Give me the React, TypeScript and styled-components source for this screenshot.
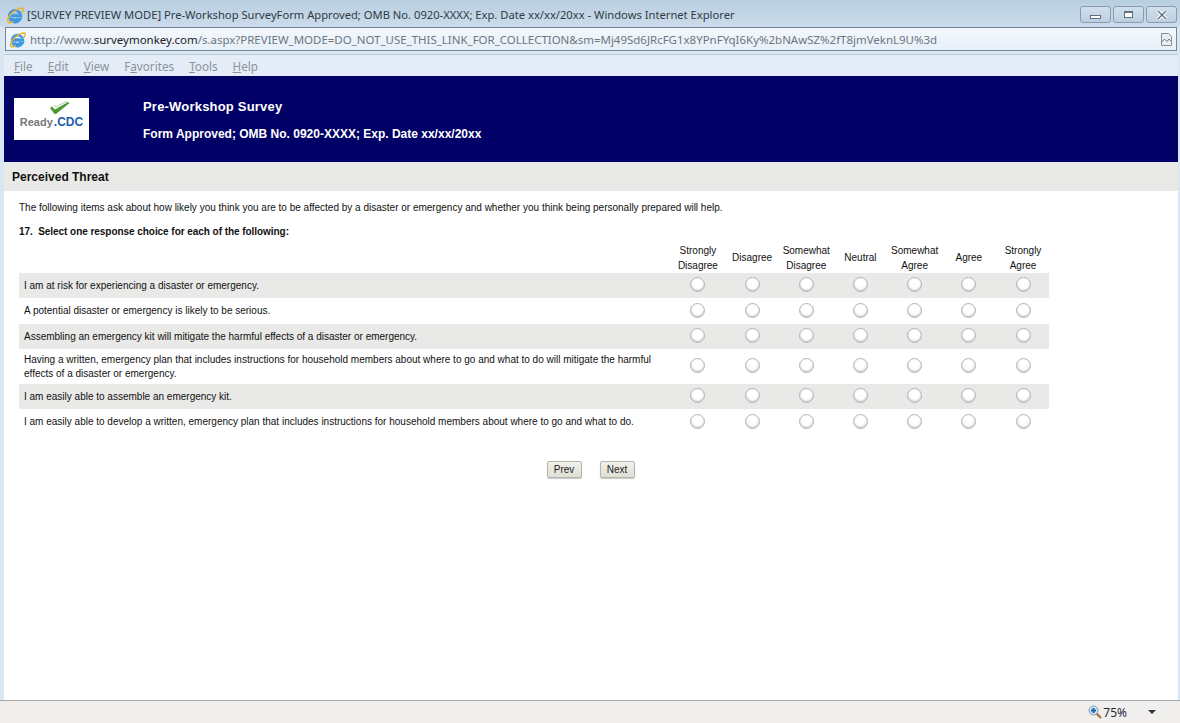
import * as React from 'react';
import styled, { createGlobalStyle } from 'styled-components';

const columns = [
  ['Strongly', 'Disagree'],
  ['Disagree'],
  ['Somewhat', 'Disagree'],
  ['Neutral'],
  ['Somewhat', 'Agree'],
  ['Agree'],
  ['Strongly', 'Agree'],
];

const rows = [
  { text: 'I am at risk for experiencing a disaster or emergency.', height: 25 },
  { text: 'A potential disaster or emergency is likely to be serious.', height: 26 },
  { text: 'Assembling an emergency kit will mitigate the harmful effects of a disaster or emergency.', height: 25 },
  {
    text: 'Having a written, emergency plan that includes instructions for household members about where to go and what to do will mitigate the harmful effects of a disaster or emergency.',
    height: 35,
  },
  { text: 'I am easily able to assemble an emergency kit.', height: 25 },
  {
    text: 'I am easily able to develop a written, emergency plan that includes instructions for household members about where to go and what to do.',
    height: 26,
  },
];

const menus = [
  ['F', 'ile'],
  ['E', 'dit'],
  ['V', 'iew'],
  ['Fa', 'vorites'],
  ['T', 'ools'],
  ['H', 'elp'],
] as const;

const IeIcon = ({ size }: { size: number }) => (
  <svg width={size} height={size} viewBox="0 0 20 20">
    <path d="M5 11h11.500a6.500 6.500 0 1 0-.8 3.500h-3.400a3.300 3.300 0 0 1-5.500-1.200" fill="none" stroke="#3d9ae0" strokeWidth="3" />
    <path d="M7 9h6.500" stroke="#3d9ae0" strokeWidth="1" />
    <path d="M2 17.500C.5 14.500 6 7 12 4c3.500-1.700 6.500-2.500 7-.8.400 1.300-.7 3.300-1.800 4.800" fill="none" stroke="#f0b22e" strokeWidth="1.700" />
    <path d="M2 17.500c1 1.700 3.800 1 6-.4" fill="none" stroke="#f0b22e" strokeWidth="1.700" />
  </svg>
);

const LogoMark = () => (
  <svg width="21" height="14" viewBox="0 0 21 14">
    <path d="M1 7l2-1.500 3 3L19 1l1.500 1L7 13H5.500z" fill="#4f9a2f" />
    <path d="M5 4l2 2L18 0" fill="none" stroke="#a9cf93" strokeWidth="1" />
  </svg>
);

const App = () => (
  <Window>
    <GlobalStyle />
    <TitleBar>
      <IeIcon size={18} />
      <TitleText>[SURVEY PREVIEW MODE] Pre-Workshop SurveyForm Approved; OMB No. 0920-XXXX; Exp. Date xx/xx/20xx - Windows Internet Explorer</TitleText>
      <WindowButtons>
        <WindowButton>
          <MinGlyph />
        </WindowButton>
        <WindowButton>
          <MaxGlyph />
        </WindowButton>
        <WindowButton>
          <svg width="12" height="10" viewBox="0 0 12 10">
            <path d="M2 1l8 8M10 1L2 9" stroke="#fff" strokeWidth="3.400" />
            <path d="M2 1l8 8M10 1L2 9" stroke="#5f6f80" strokeWidth="1.400" />
          </svg>
        </WindowButton>
      </WindowButtons>
    </TitleBar>
    <AddressBar>
      <IeIcon size={17} />
      <Url>
        http://www.<b>surveymonkey.com</b>/s.aspx?PREVIEW_MODE=DO_NOT_USE_THIS_LINK_FOR_COLLECTION&amp;sm=Mj49Sd6JRcFG1x8YPnFYqI6Ky%2bNAwSZ%2fT8jmVeknL9U%3d
      </Url>
      <svg width="11" height="13" viewBox="0 0 11 13">
        <path d="M.5.500h7l3 3v9H.5z" fill="#e8eef4" stroke="#8a8f94" />
        <path d="M1 9l2.500-3 2.500 2.500L8 6l2 2" fill="none" stroke="#777" />
      </svg>
    </AddressBar>
    <MenuBar>
      {menus.map(([key, rest]) => (
        <MenuItem key={key}>
          {key === 'Fa' ? (
            <>
              F<u>a</u>
            </>
          ) : (
            <u>{key}</u>
          )}
          {rest}
        </MenuItem>
      ))}
    </MenuBar>
    <Page>
      <Banner>
        <Logo>
          <LogoCheck>
            <LogoMark />
          </LogoCheck>
          <LogoReady>Ready</LogoReady>
          <LogoCdc>.CDC</LogoCdc>
        </Logo>
        <BannerText>
          <SurveyTitle>Pre-Workshop Survey</SurveyTitle>
          <SurveySubtitle>Form Approved; OMB No. 0920-XXXX; Exp. Date xx/xx/20xx</SurveySubtitle>
        </BannerText>
      </Banner>
      <SectionHeader>Perceived Threat</SectionHeader>
      <Content>
        <Intro>
          The following items ask about how likely you think you are to be affected by a disaster or emergency and whether you think being personally prepared will help.
        </Intro>
        <Question>17.&nbsp; Select one response choice for each of the following:</Question>
        <Matrix>
          <HeaderRow>
            <RowLabel />
            {columns.map((lines, i) => (
              <HeaderCell key={i}>
                {lines.map((l) => (
                  <div key={l}>{l}</div>
                ))}
              </HeaderCell>
            ))}
          </HeaderRow>
          {rows.map((row, r) => (
            <Row key={r} $shaded={r % 2 === 0} $height={row.height}>
              <RowLabel>{row.text}</RowLabel>
              {columns.map((_, c) => (
                <RadioCell key={c}>
                  <Radio />
                </RadioCell>
              ))}
            </Row>
          ))}
        </Matrix>
        <Buttons>
          <NavButton>Prev</NavButton>
          <NavButton>Next</NavButton>
        </Buttons>
      </Content>
    </Page>
    <StatusBar>
      <svg width="14" height="14" viewBox="0 0 14 14">
        <path d="M8.500 8.500l4.500 4.500" stroke="#a5793f" strokeWidth="2.400" />
        <circle cx="5.500" cy="5.500" r="4.500" fill="#cfe2f3" stroke="#7f99b3" />
        <path d="M3 5.500h5M5.500 3v5" stroke="#1c5fb0" strokeWidth="1.800" />
      </svg>
      <Zoom>75%</Zoom>
      <Caret />
    </StatusBar>
  </Window>
);

export default App;

const GlobalStyle = createGlobalStyle`
  html, body {
    margin: 0;
    padding: 0;
    height: 100%;
    overflow: hidden;
  }
`;

const Window = styled.div`
  width: 1180px;
  height: 723px;
  display: flex;
  flex-direction: column;
  background: #dbe6f3;
  font-family: 'Liberation Sans', Arial, sans-serif;
  overflow: hidden;
`;

const TitleBar = styled.div`
  height: 27px;
  flex: none;
  display: flex;
  align-items: center;
  gap: 3px;
  padding: 2px 3px 0 6px;
  box-sizing: border-box;
  background: linear-gradient(#b9cfe2, #cbdbea);
`;

const TitleText = styled.div`
  flex: 1;
  font: 11.200px 'Noto Sans', 'Open Sans', sans-serif;
  color: #2f3a44;
  white-space: nowrap;
`;

const WindowButtons = styled.div`
  display: flex;
  gap: 2px;
`;

const WindowButton = styled.div`
  width: 29px;
  height: 15px;
  display: flex;
  align-items: center;
  justify-content: center;
  border: 1px solid #8b9cb0;
  border-radius: 3px;
  background: linear-gradient(#d2dfec, #bccfe0);
`;

const MinGlyph = styled.div`
  width: 9px;
  height: 2px;
  margin-top: 4px;
  border: 1px solid #5f6f80;
  background: #fff;
`;

const MaxGlyph = styled.div`
  width: 7px;
  height: 4px;
  border: 1px solid #5f6f80;
  border-top-width: 2px;
  background: #fff;
`;

const AddressBar = styled.div`
  height: 22px;
  flex: none;
  display: flex;
  align-items: center;
  margin: 0 3px 0 5px;
  padding: 0 4px 0 3px;
  gap: 4px;
  background: linear-gradient(#f4f8fc, #e6eff8);
  border: 1px solid #75889c;
  border-top-color: #6f8398;
`;

const Url = styled.div`
  flex: 1;
  font: 11.470px 'Noto Sans', 'Open Sans', sans-serif;
  color: #6d7680;
  white-space: nowrap;
  overflow: hidden;

  b {
    font-weight: 400;
    color: #1c2228;
  }
`;

const MenuBar = styled.div`
  height: 22px;
  margin: 3px 2px 0 4px;
  flex: none;
  display: flex;
  align-items: center;
  gap: 15px;
  padding-left: 10px;
  background: #e4ecf7;
  border-top: 1px solid #b8c8d6;
  box-sizing: border-box;
`;

const MenuItem = styled.span`
  font: 11.700px 'Noto Sans', 'Open Sans', sans-serif;
  color: #8c939b;
`;

const Page = styled.div`
  flex: 1;
  margin: 0 2px 0 4px;
  background: #fff;
  display: flex;
  flex-direction: column;
  min-height: 0;
`;

const Banner = styled.div`
  height: 86px;
  flex: none;
  display: flex;
  background: #000066;
  color: #fff;
  padding: 22px 0 0 10px;
  box-sizing: border-box;
`;

const Logo = styled.div`
  position: relative;
  width: 75px;
  height: 42px;
  background: #fff;
  display: flex;
  align-items: flex-end;
  justify-content: center;
  gap: 1px;
  padding-bottom: 11px;
  box-sizing: border-box;
  font-weight: 700;
  font-size: 11px;
  line-height: 14px;
`;

const LogoCheck = styled.div`
  position: absolute;
  left: 35px;
  top: 3px;
  line-height: 0;
`;

const LogoReady = styled.span`
  color: #77787b;
`;

const LogoCdc = styled.span`
  color: #1b5ea8;
  font-size: 12px;
`;

const BannerText = styled.div`
  margin-left: 54px;
  font-weight: 700;
  font-size: 12px;
`;

const SurveyTitle = styled.div`
  margin-top: 1px;
  line-height: 16px;
  font-size: 13px;
  letter-spacing: 0.2px;
`;

const SurveySubtitle = styled.div`
  margin-top: 11px;
  line-height: 16px;
`;

const SectionHeader = styled.div`
  height: 29px;
  flex: none;
  display: flex;
  align-items: center;
  padding-left: 8px;
  background: #e9e9e7;
  font-size: 12px;
  font-weight: 700;
  color: #111;
`;

const Content = styled.div`
  padding: 10px 0 0 15px;
  color: #111;
  font-size: 10px;
`;

const Intro = styled.div`
  line-height: 14px;
`;

const Question = styled.div`
  margin-top: 10px;
  line-height: 14px;
  font-weight: 700;
  letter-spacing: -0.05px;
`;

const Matrix = styled.div`
  width: 1030px;
  margin-top: 3px;
`;

const HeaderRow = styled.div`
  height: 31px;
  display: flex;
  align-items: center;
`;

const HeaderCell = styled.div`
  flex: 0 0 54.200px;
  text-align: center;
  line-height: 15px;
`;

const Row = styled.div<{ $shaded: boolean; $height: number }>`
  height: ${(p) => p.$height}px;
  display: flex;
  align-items: center;
  background: ${(p) => (p.$shaded ? '#e9e9e7' : '#fff')};
`;

const RowLabel = styled.div`
  flex: 0 0 651.800px;
  box-sizing: border-box;
  padding: 0 12px 0 5px;
  line-height: 14px;
`;

const RadioCell = styled.div`
  flex: 0 0 54.200px;
  display: flex;
  justify-content: center;
  padding-bottom: 2px;
`;

const Radio = styled.div`
  width: 13px;
  height: 13px;
  border-radius: 50%;
  border: 1px solid #b4b4b4;
  background: radial-gradient(circle at 50% 40%, #fff 40%, #e4e4e4 100%);
  box-shadow: inset 0 -1px 1px #c8c8c8;
`;

const Buttons = styled.div`
  display: flex;
  justify-content: center;
  gap: 18px;
  width: 1143px;
  margin-top: 26px;
`;

const NavButton = styled.div`
  width: 33px;
  height: 15px;
  display: flex;
  align-items: center;
  justify-content: center;
  border: 1px solid #b5b5ad;
  border-radius: 2px;
  background: linear-gradient(#f1f1eb, #dfdfd6);
  box-shadow: 0 1px 1px #c8c8c8;
  color: #222;
`;

const StatusBar = styled.div`
  height: 23px;
  flex: none;
  display: flex;
  align-items: center;
  justify-content: flex-end;
  padding-right: 24px;
  gap: 1px;
  box-sizing: border-box;
  border-top: 1px solid #a5a8ab;
  background: #f1efed;
`;

const Zoom = styled.span`
  font: 12px 'Noto Sans', 'Open Sans', sans-serif;
  color: #1c2a3a;
  margin-right: 20px;
`;

const Caret = styled.div`
  width: 0;
  height: 0;
  border-left: 4px solid transparent;
  border-right: 4px solid transparent;
  border-top: 4px solid #333;
`;
